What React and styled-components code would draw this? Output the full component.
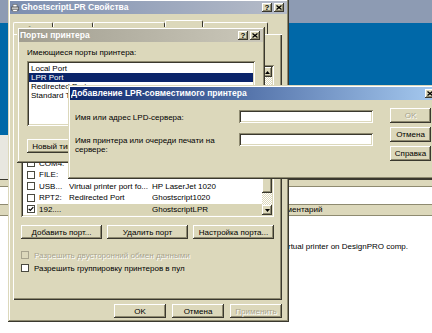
import React from 'react';
import styled, { createGlobalStyle, css } from 'styled-components';

const FACE = '#dcd8bb';
const SHADOW = '#8e8a70';
const DARK = '#3a382e';

const GlobalStyle = createGlobalStyle`
  html, body {
    margin: 0;
    padding: 0;
    background: #0068a8;
  }
  body {
    font-family: "Liberation Sans", Arial, sans-serif;
    font-size: 8px;
    color: #000;
  }
  *, *::before, *::after {
    box-sizing: border-box;
  }
`;

const raised = css`
  background: ${FACE};
  box-shadow: inset -1px -1px ${DARK}, inset 1px 1px #fff, inset -2px -2px ${SHADOW};
`;

const sunken = css`
  background: #fff;
  box-shadow: inset 1px 1px ${SHADOW}, inset -1px -1px #fff, inset 2px 2px ${DARK}, inset -2px -2px ${FACE};
`;

const disabledText = css`
  color: #a8a48e;
  text-shadow: 1px 1px #fff;
`;

const Desktop = styled.div`
  position: relative;
  width: 432px;
  height: 333px;
  overflow: hidden;
  background: linear-gradient(to bottom, #8d9bb3 0 23px, #0068a8 23px);
`;

/* printer folder window lying behind the dialogs */
const BackWindow = styled.div`
  position: absolute;
  left: 0;
  right: 0;
  top: 135px;
  bottom: 0;
  display: flex;
  flex-direction: column;
  background: #fff;
`;

const BackTop = styled.div`
  height: 44px;
  background: #e8e7e0;
`;

const BackBand = styled.div`
  height: 8px;
  background: ${FACE};
  border-top: 1px solid ${DARK};
  border-bottom: 1px solid ${SHADOW};
`;

const BackAddress = styled.div`
  height: 17px;
  background: #fff;
`;

const ColumnHeader = styled.div`
  height: 12px;
  display: flex;
  background: ${FACE};
  border-top: 1px solid ${SHADOW};
  border-bottom: 1px solid ${SHADOW};
`;

const HeadCell = styled.div`
  width: ${(p) => (p.$w ? `${p.$w}px` : 'auto')};
  flex: ${(p) => (p.$w ? 'none' : 1)};
  padding: 0 3px;
  line-height: 10px;
  white-space: nowrap;
`;

const BackList = styled.div`
  padding-top: 22px;
`;

const BackRow = styled.div`
  display: flex;
  height: 16px;
  align-items: center;
`;

const BackCell = styled.div`
  width: ${(p) => (p.$w ? `${p.$w}px` : 'auto')};
  flex: ${(p) => (p.$w ? 'none' : 1)};
  padding-left: ${(p) => p.$indent || 3}px;
  white-space: nowrap;
`;

const Window = styled.div`
  position: absolute;
  left: ${(p) => p.$left}px;
  top: ${(p) => p.$top}px;
  width: ${(p) => p.$width}px;
  height: ${(p) => p.$height}px;
  display: flex;
  flex-direction: column;
  padding: 2px;
  background: ${FACE};
  box-shadow: inset -1px -1px ${DARK}, inset 1px 1px ${FACE}, inset -2px -2px ${SHADOW}, inset 2px 2px #fff;
`;

const titleBg = {
  active: 'linear-gradient(to right, #0a246a, #a6caf0)',
  main: 'linear-gradient(to right, #7c8eb0, #b6bcc8)',
  idle: 'linear-gradient(to right, #a19e90, #cbc8ba)',
};

const TitleBar = styled.div`
  flex: none;
  height: 13px;
  display: flex;
  align-items: center;
  gap: 2px;
  padding: 0 3px 0 1px;
  background: ${(p) => titleBg[p.$tone]};
  color: #fff;
  font-size: 8.5px;
  font-weight: bold;
  white-space: nowrap;
`;

const TitleText = styled.span`
  flex: 1;
  overflow: hidden;
  line-height: 13px;
`;

const TitleButtons = styled.div`
  display: flex;
  gap: 2px;
`;

const TitleButton = styled.div`
  ${raised};
  width: 10px;
  height: 9px;
  display: flex;
  align-items: center;
  justify-content: center;
  color: #000;
  font-size: 8px;
  font-weight: bold;
  line-height: 1;
`;

const MainBody = styled.div`
  flex: 1;
  display: flex;
  flex-direction: column;
  padding: 6px 5px 0 3px;
`;

const TabStrip = styled.div`
  height: 14px;
  display: flex;
  align-items: flex-end;
`;

const Tab = styled.div`
  height: ${(p) => (p.$active ? 14 : 12)}px;
  padding: ${(p) => (p.$active ? 4 : 2)}px 6px 0;
  line-height: 10px;
  white-space: nowrap;
  border-top: 1px solid #fff;
  border-left: 1px solid #fff;
  border-right: 1px solid ${DARK};
  border-radius: 2px 2px 0 0;
  background: ${FACE};
`;

const TabPage = styled.div`
  height: 266px;
  display: flex;
  flex-direction: column;
  padding: 31px 8px 0;
  box-shadow: inset 1px 1px #fff, inset -1px -1px ${DARK}, inset -2px -2px ${SHADOW};
`;

const PortList = styled.div`
  ${sunken};
  height: 152px;
  padding: 2px;
  display: flex;
`;

const ListMain = styled.div`
  flex: 1;
  min-width: 0;
  display: flex;
  flex-direction: column;
`;

const ListHead = styled.div`
  height: 12px;
  display: flex;
`;

const ListHeadCell = styled.div`
  ${raised};
  width: ${(p) => (p.$w ? `${p.$w}px` : 'auto')};
  flex: ${(p) => (p.$w ? 'none' : 1)};
`;

const ListRows = styled.div`
  flex: 1;
  display: flex;
  flex-direction: column;
  justify-content: flex-end;
  overflow: hidden;
`;

const PortRow = styled.div`
  flex: none;
  height: 11.5px;
  display: flex;
  align-items: center;
  padding-left: 4px;
`;

const RowCells = styled.div`
  flex: 1;
  display: flex;
  height: 100%;
  align-items: center;
  margin-left: 2px;
  padding-left: 2px;
  background: ${(p) => (p.$selected ? '#d9d5b6' : 'transparent')};
  white-space: nowrap;
  overflow: hidden;
`;

const Cell = styled.span`
  width: ${(p) => (p.$w ? `${p.$w}px` : 'auto')};
  flex: ${(p) => (p.$w ? 'none' : 1)};
  overflow: hidden;
`;

const Box = styled.span`
  flex: none;
  width: 8px;
  height: 8px;
  display: inline-flex;
  align-items: center;
  justify-content: center;
  background: ${(p) => (p.$disabled ? FACE : '#fff')};
  border: 1px solid ${(p) => (p.$disabled ? '#a8a48e' : '#4a4a40')};
`;

const Scrollbar = styled.div`
  width: 10px;
  display: flex;
  flex-direction: column;
`;

const ScrollArrow = styled.div`
  ${raised};
  height: 10px;
  display: flex;
  align-items: center;
  justify-content: center;
`;

const ScrollTrack = styled.div`
  flex: 1;
  display: flex;
  flex-direction: column;
  justify-content: flex-end;
  padding-bottom: 12px;
  background: repeating-conic-gradient(#fff 0 25%, ${FACE} 0 50%) 0 0 / 2px 2px;
`;

const ScrollThumb = styled.div`
  ${raised};
  height: 15px;
`;

const ButtonRow = styled.div`
  margin-top: 8px;
  display: grid;
  grid-template-columns: repeat(3, 1fr);
  gap: 5px;
`;

const Button = styled.div`
  ${raised};
  width: ${(p) => (p.$w ? `${p.$w}px` : 'auto')};
  height: ${(p) => p.$h || 14}px;
  display: flex;
  align-items: center;
  justify-content: center;
  white-space: nowrap;
  overflow: hidden;
  ${(p) => p.$disabled && disabledText};
`;

const CheckLine = styled.div`
  margin-top: ${(p) => p.$gap}px;
  height: 10px;
  display: flex;
  align-items: center;
  gap: 5px;
  ${(p) => p.$disabled && disabledText};
`;

const DialogButtons = styled.div`
  margin-top: 4px;
  display: flex;
  justify-content: flex-end;
  gap: 6px;
`;

const PortsBody = styled.div`
  flex: 1;
  display: flex;
  flex-direction: column;
  align-items: flex-start;
  padding: 6px 8px 0;
`;

const Label = styled.div`
  line-height: 10px;
  margin-bottom: 3px;
`;

const SimpleList = styled.div`
  ${sunken};
  align-self: stretch;
  height: 65px;
  padding: 3px 2px 2px;
  margin-bottom: 13px;
`;

const SimpleItem = styled.div`
  height: 9px;
  line-height: 9px;
  padding-left: 2px;
  white-space: nowrap;
  background: ${(p) => (p.$selected ? '#0a246a' : 'transparent')};
  color: ${(p) => (p.$selected ? '#fff' : '#000')};
`;

const LprBody = styled.div`
  flex: 1;
  display: flex;
  gap: 17px;
  padding: 8px 0 0 5px;
`;

const FormGrid = styled.div`
  margin-top: 2px;
  display: grid;
  grid-template-columns: 164px 134px;
  row-gap: 10px;
  align-items: start;
  align-content: start;
`;

const FieldLabel = styled.div`
  max-width: 140px;
  padding-top: 3px;
  line-height: 9px;
`;

const TextInput = styled.div`
  ${sunken};
  height: 13px;
`;

const SideButtons = styled.div`
  width: 41px;
  display: flex;
  flex-direction: column;
  gap: 4px;
`;

const PrinterIcon = () => (
  <svg width="8" height="8" viewBox="0 0 8 8">
    <rect x="2" y="0.5" width="4" height="2.5" fill="#fff" stroke="#666" strokeWidth="0.6" />
    <rect x="0.3" y="3" width="7.4" height="3" fill="#c4c4c4" stroke="#444" strokeWidth="0.6" />
    <rect x="1.8" y="5.5" width="4.4" height="2" fill="#fff" stroke="#666" strokeWidth="0.6" />
  </svg>
);

const CloseGlyph = () => (
  <svg width="6" height="5" viewBox="0 0 6 5">
    <path d="M0.5 0.5 L5.5 4.5 M5.5 0.5 L0.5 4.5" stroke="#000" strokeWidth="1.3" />
  </svg>
);

const CheckMark = () => (
  <svg width="6" height="6" viewBox="0 0 6 6">
    <path d="M0.7 2.8 L2.3 4.4 L5.3 1.2" fill="none" stroke="#000" strokeWidth="1.2" />
  </svg>
);

const DownArrow = () => (
  <svg width="5" height="3" viewBox="0 0 5 3">
    <path d="M0 0 H5 L2.5 3 Z" fill="#000" />
  </svg>
);

const UpArrow = () => (
  <svg width="5" height="3" viewBox="0 0 5 3">
    <path d="M0 3 H5 L2.5 0 Z" fill="#000" />
  </svg>
);

const tabs = ['Общие', 'Доступ', 'Дополнительно', 'Порты', 'Безопасность'];

// only the rows that show below the dialogs
const ports = [
  { name: 'COM4:', desc: '', printer: '' },
  { name: 'FILE:', desc: '', printer: '' },
  { name: 'USB...', desc: 'Virtual printer port fo...', printer: 'HP LaserJet 1020' },
  { name: 'RPT2:', desc: 'Redirected Port', printer: 'Ghostscript1020' },
  { name: '192....', desc: '', printer: 'GhostscriptLPR', checked: true, selected: true },
];

const portTypes = ['Local Port', 'LPR Port', 'Redirected Port', 'Standard TCP/IP Port'];

export default function App() {
  return (
    <Desktop>
      <GlobalStyle />

      <BackWindow>
        <BackTop />
        <BackBand />
        <BackAddress />
        <ColumnHeader>
          <HeadCell $w={269} />
          <HeadCell>Комментарий</HeadCell>
        </ColumnHeader>
        <BackList>
          <BackRow>
            <BackCell $w={269} />
            <BackCell $indent={12}>Virtual printer on DesignPRO comp.</BackCell>
          </BackRow>
        </BackList>
      </BackWindow>

      <Window $left={8} $top={-1} $width={281} $height={323}>
        <TitleBar $tone="main">
          <PrinterIcon />
          <TitleText>GhostscriptLPR Свойства</TitleText>
          <TitleButtons>
            <TitleButton>?</TitleButton>
            <TitleButton><CloseGlyph /></TitleButton>
          </TitleButtons>
        </TitleBar>
        <MainBody>
          <TabStrip>
            {tabs.map((t) => (
              <Tab key={t} $active={t === 'Порты'}>{t}</Tab>
            ))}
          </TabStrip>
          <TabPage>
            <PortList>
              <ListMain>
                <ListHead>
                  <ListHeadCell $w={46} />
                  <ListHeadCell $w={83} />
                  <ListHeadCell />
                </ListHead>
                <ListRows>
                  {ports.map((p) => (
                    <PortRow key={p.name}>
                      <Box>{p.checked && <CheckMark />}</Box>
                      <RowCells $selected={p.selected}>
                        <Cell $w={30}>{p.name}</Cell>
                        <Cell $w={83}>{p.desc}</Cell>
                        <Cell>{p.printer}</Cell>
                      </RowCells>
                    </PortRow>
                  ))}
                </ListRows>
              </ListMain>
              <Scrollbar>
                <ScrollArrow><UpArrow /></ScrollArrow>
                <ScrollTrack>
                  <ScrollThumb />
                </ScrollTrack>
                <ScrollArrow><DownArrow /></ScrollArrow>
              </Scrollbar>
            </PortList>
            <ButtonRow>
              <Button>Добавить порт...</Button>
              <Button>Удалить порт</Button>
              <Button>Настройка порта...</Button>
            </ButtonRow>
            <CheckLine $gap={11} $disabled>
              <Box $disabled />
              Разрешить двусторонний обмен данными
            </CheckLine>
            <CheckLine $gap={3}>
              <Box />
              Разрешить группировку принтеров в пул
            </CheckLine>
          </TabPage>
          <DialogButtons>
            <Button $w={52}>OK</Button>
            <Button $w={52}>Отмена</Button>
            <Button $w={52} $disabled>Применить</Button>
          </DialogButtons>
        </MainBody>
      </Window>

      <Window $left={17} $top={27} $width={248} $height={136}>
        <TitleBar $tone="idle">
          <TitleText>Порты принтера</TitleText>
          <TitleButtons>
            <TitleButton>?</TitleButton>
            <TitleButton><CloseGlyph /></TitleButton>
          </TitleButtons>
        </TitleBar>
        <PortsBody>
          <Label>Имеющиеся порты принтера:</Label>
          <SimpleList>
            {portTypes.map((t) => (
              <SimpleItem key={t} $selected={t === 'LPR Port'}>{t}</SimpleItem>
            ))}
          </SimpleList>
          <Button $w={80}>Новый тип порта...</Button>
        </PortsBody>
      </Window>

      <Window $left={68} $top={85} $width={372} $height={94}>
        <TitleBar $tone="active">
          <TitleText>Добавление LPR-совместимого принтера</TitleText>
          <TitleButtons>
            <TitleButton><CloseGlyph /></TitleButton>
          </TitleButtons>
        </TitleBar>
        <LprBody>
          <FormGrid>
            <FieldLabel>Имя или адрес LPD-сервера:</FieldLabel>
            <TextInput />
            <FieldLabel>Имя принтера или очереди печати на сервере:</FieldLabel>
            <TextInput />
          </FormGrid>
          <SideButtons>
            <Button $h={15} $disabled>OK</Button>
            <Button $h={15}>Отмена</Button>
            <Button $h={15}>Справка</Button>
          </SideButtons>
        </LprBody>
      </Window>
    </Desktop>
  );
}
